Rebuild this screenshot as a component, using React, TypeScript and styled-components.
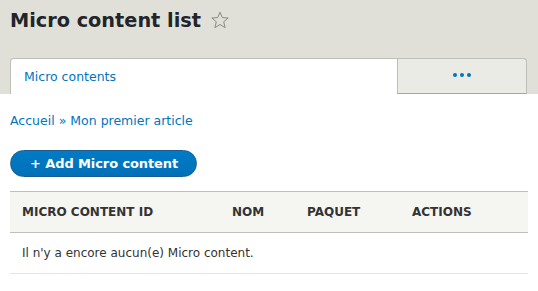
import React from "react";
import styled, { createGlobalStyle } from "styled-components";

const Global = createGlobalStyle`
  html, body { margin: 0; padding: 0; background: #fff; }
  body { font-family: "DejaVu Sans", Verdana, sans-serif; color: #333; }
`;

const Header = styled.header`
  background: #e0e0d8;
  padding: 0 11px 0 10px;
`;

const TitleRow = styled.div`
  display: flex;
  align-items: flex-start;
  gap: 9px;
  height: 58px;
  padding-top: 9px;
  box-sizing: border-box;
`;

const Title = styled.h1`
  margin: 0;
  font-size: 19.3px;
  line-height: 24px;
  font-weight: bold;
  color: #232429;
`;

const StarIcon = styled.svg`
  margin-top: 2px;
  flex: none;
`;

const Tabs = styled.nav`
  display: flex;
  height: 36px;
`;

const Tab = styled.a<{ $active?: boolean; $w: number }>`
  box-sizing: border-box;
  width: ${(p) => p.$w}px;
  display: flex;
  align-items: center;
  justify-content: ${(p) => (p.$active ? "flex-start" : "center")};
  padding-left: ${(p) => (p.$active ? "13px" : "0")};
  background: ${(p) => (p.$active ? "#fff" : "#ebebe6")};
  border: 1px solid #bfbfba;
  border-bottom: ${(p) => (p.$active ? "none" : "1px solid #a6a6a0")};
  border-right: ${(p) => (p.$active ? "none" : "1px solid #bfbfba")};
  border-radius: ${(p) => (p.$active ? "4px 0 0 0" : "0 4px 0 0")};
  color: #0074bd;
  font-size: 12.5px;
  text-decoration: none;
`;

const Dots = styled.span`
  display: flex;
  gap: 3px;
  margin-top: -2px;
`;

const Dot = styled.span`
  width: 4px;
  height: 4px;
  border-radius: 50%;
  background: #0074bd;
`;

const Content = styled.main`
  padding: 0 10px;
`;

const Breadcrumb = styled.div`
  margin-top: 19px;
  font-size: 12.5px;
  line-height: 16px;
  color: #0074bd;
`;

const Crumb = styled.a`
  color: #0074bd;
  text-decoration: none;
`;

const Sep = styled.span`
  color: #0074bd;
  margin: 0 4px;
`;

const Button = styled.a`
  display: inline-flex;
  align-items: center;
  box-sizing: border-box;
  margin-top: 21px;
  height: 27px;
  width: 187px;
  padding: 0 0 0 19px;
  border-radius: 20px;
  background: linear-gradient(#007bc6, #0071b8);
  border: 1px solid #1e5c90;
  color: #fff;
  font-weight: bold;
  font-size: 13px;
  text-decoration: none;
  letter-spacing: -0.1px;
`;

const Table = styled.table`
  margin-top: 14px;
  width: 518px;
  border-collapse: collapse;
  table-layout: fixed;
`;

const Th = styled.th<{ $w: number }>`
  width: ${(p) => p.$w}px;
  height: 40px;
  padding: 0 0 0 12px;
  text-align: left;
  background: #f5f5f2;
  border-top: 1px solid #bfbfba;
  border-bottom: 1px solid #bfbfba;
  font-size: 12px;
  font-weight: bold;
  text-transform: uppercase;
  color: #333;
`;

const Td = styled.td`
  height: 40px;
  padding: 0 0 0 12px;
  font-size: 12px;
  color: #333;
  border-bottom: 1px solid #e6e4df;
`;

const Star = () => (
  <StarIcon width="20" height="18" viewBox="0 0 20 18">
    <path
      d="M10 1.2 L12.3 6.6 L18.2 7 L13.7 10.8 L15.1 16.6 L10 13.5 L4.9 16.6 L6.3 10.8 L1.8 7 L7.7 6.6 Z"
      fill="none"
      stroke="#8a8a7e"
      strokeWidth="1"
      strokeLinejoin="round"
    />
  </StarIcon>
);

export default function App() {
  return (
    <>
      <Global />
      <Header>
        <TitleRow>
          <Title>Micro content list</Title>
          <Star />
        </TitleRow>
        <Tabs>
          <Tab $active $w={387} href="#">Micro contents</Tab>
          <Tab $w={130} href="#">
            <Dots>
              <Dot />
              <Dot />
              <Dot />
            </Dots>
          </Tab>
        </Tabs>
      </Header>
      <Content>
        <Breadcrumb>
          <Crumb href="#">Accueil</Crumb>
          <Sep>»</Sep>
          <Crumb href="#">Mon premier article</Crumb>
        </Breadcrumb>
        <Button href="#">+ Add Micro content</Button>
        <Table>
          <thead>
            <tr>
              <Th $w={198}>Micro content ID</Th>
              <Th $w={63}>Nom</Th>
              <Th $w={93}>Paquet</Th>
              <Th $w={116}>Actions</Th>
            </tr>
          </thead>
          <tbody>
            <tr>
              <Td colSpan={4}>Il n'y a encore aucun(e) Micro content.</Td>
            </tr>
          </tbody>
        </Table>
      </Content>
    </>
  );
}
